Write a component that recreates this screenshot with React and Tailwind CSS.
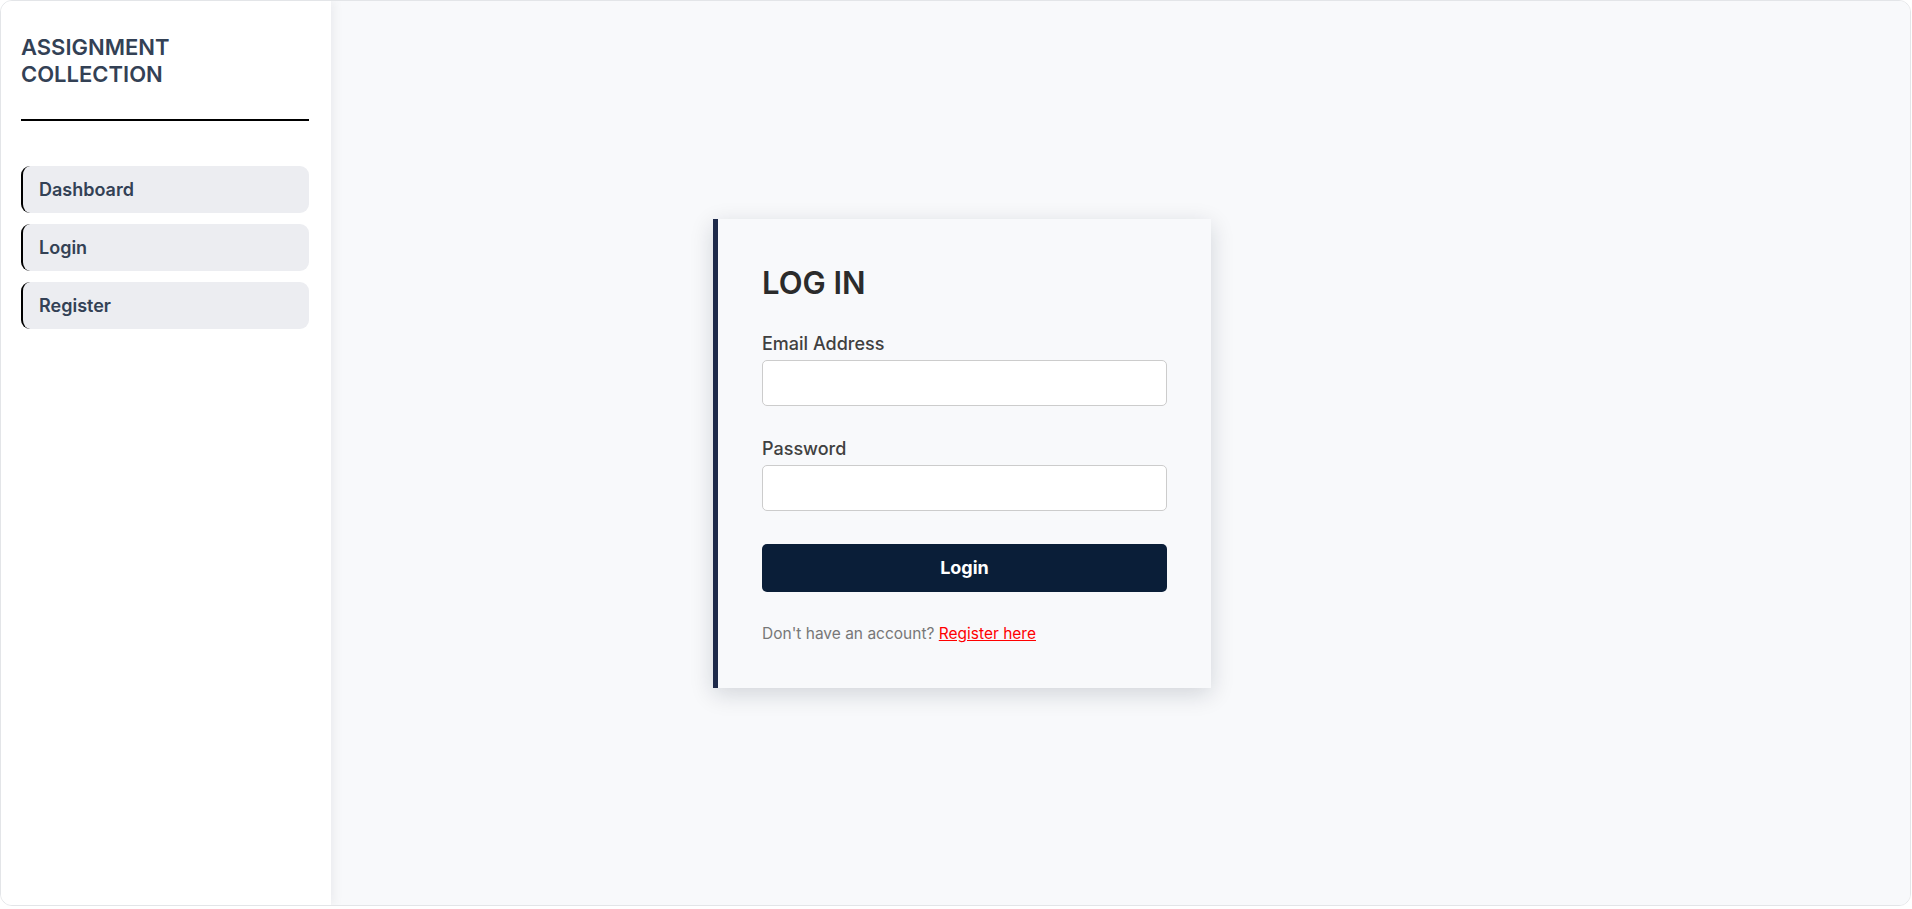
import React from "react";

export default function App() {
  const nav = ["Dashboard", "Login", "Register"];
  return (
    <div className="w-[1912px] h-[909px] bg-white" style={{ fontFamily: "Inter, 'Noto Sans', sans-serif" }}>
      <div className="w-[1911px] h-[906px] rounded-[12px] border border-[#e3e5e8] overflow-hidden flex">
        <aside className="relative z-10 w-[330px] shrink-0 bg-white pl-[20px] pr-[22px] pt-[33px] shadow-[3px_0_10px_rgba(15,23,42,0.06)]">
          <h1 className="text-[22px] leading-[27px] font-semibold text-[#334155]">
            ASSIGNMENT
            <br />
            COLLECTION
          </h1>
          <div className="mt-[31px] h-[2px] bg-black" />
          <nav className="mt-[45px] flex flex-col gap-[11px]">
            {nav.map((n) => (
              <div
                key={n}
                className="h-[47px] flex items-center rounded-[9px] border-l-2 border-black bg-[#ecedf1] pl-[16px] text-[18px] font-semibold text-[#334155]"
              >
                {n}
              </div>
            ))}
          </nav>
        </aside>
        <main className="flex-1 bg-[#f8f9fb] flex items-center pl-[382px]">
          <div className="w-[498px] bg-[#f8f9fb] border-l-[5px] border-[#1e2a4a] pl-[44px] pr-[44px] pt-[45px] pb-[42px] shadow-[0_6px_22px_rgba(15,23,42,0.16)]">
            <h2 className="text-[31px] leading-[37px] font-semibold text-[#2b2b2b]">LOG IN</h2>
            <label className="block mt-[31px] text-[18px] leading-[24px] font-medium text-[#404040]">Email Address</label>
            <input type="email" className="mt-[4px] block w-full h-[46px] rounded-[5px] border border-[#cccccc] bg-white outline-none" />
            <label className="block mt-[31px] text-[18px] leading-[24px] font-medium text-[#404040]">Password</label>
            <input type="password" className="mt-[4px] block w-full h-[46px] rounded-[5px] border border-[#cccccc] bg-white outline-none" />
            <button className="mt-[33px] w-full h-[48px] rounded-[5px] bg-[#0a1e38] text-white text-[18px] font-bold">Login</button>
            <p className="mt-[30px] text-[15.5px] leading-[24px] text-[#777777]">
              Don't have an account?{" "}
              <a href="#" className="text-[#ff0000] underline">Register here</a>
            </p>
          </div>
        </main>
      </div>
    </div>
  );
}
